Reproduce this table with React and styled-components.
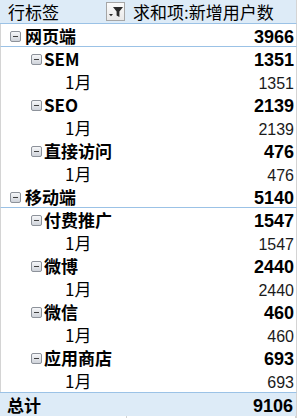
import React from 'react'
import styled, { createGlobalStyle } from 'styled-components'

const GlobalStyle = createGlobalStyle`
  html, body { margin: 0; padding: 0; background: #fff; }
  body { font-family: "Liberation Sans", "Noto Sans CJK SC", sans-serif; color: #000; }
`

const Sheet = styled.div`
  width: 299px;
  height: 418px;
  overflow: hidden;
  background: #fff;
`

const Row = styled.div`
  display: grid;
  grid-template-columns: 127px 169px;
  align-items: baseline;
  width: 297px;
  height: 23px;
  box-sizing: border-box;
  line-height: 23px;
  border-left: 1px solid #d4d4d4;
  border-right: 1px solid #d4d4d4;
  border-bottom: ${({ divider }) => (divider ? '1px solid #9bc2e6' : 'none')};
  white-space: nowrap;
`

const HeaderRow = styled(Row)`
  height: 24px;
  align-items: center;
  background: #ddebf7;
  border-left: none;
  border-bottom: 1px solid #9bc2e6;
`

const TotalRow = styled(Row)`
  height: 24px;
  background: #ddebf7;
  border-left: none;
  border-top: 1px solid #9bc2e6;
`

const Filler = styled.div`
  display: grid;
  grid-template-columns: 127px 169px;
  width: 297px;
  height: 10px;
  box-sizing: border-box;
  border-right: 1px solid #d4d4d4;
  & > div { border-right: 1px solid #d4d4d4; }
`

const HeadLabel = styled.div`
  display: flex;
  align-items: center;
  justify-content: space-between;
  padding: 0 2px 0 8px;
  font-family: "Noto Sans CJK SC", sans-serif;
  font-size: 17px;
`

const HeadValue = styled.div`
  padding-left: 6px;
  font-family: "Noto Sans CJK SC", sans-serif;
  font-size: 17px;
`

const FilterButton = styled.span`
  display: inline-flex;
  width: 19px;
  height: 19px;
  box-sizing: border-box;
  border: 1px solid #a6a6a6;
  background: linear-gradient(#fbfbfb, #e9e9e9);
`

const Label = styled.div`
  padding-left: ${({ indent }) => indent}px;
  font-family: "Noto Sans CJK SC", sans-serif;
  font-size: 17px;
  font-weight: ${({ bold }) => (bold ? 700 : 400)};
`

const Toggle = styled.span`
  display: inline-block;
  position: relative;
  width: 11px;
  height: 11px;
  margin-right: ${({ gap }) => gap}px;
  box-sizing: border-box;
  border: 1px solid #8d929a;
  border-radius: 2px;
  background: linear-gradient(#f6f7f9, #cfd3da);
  vertical-align: 1px;

  &::after {
    content: '';
    position: absolute;
    left: 2px;
    right: 2px;
    top: 4px;
    height: 1px;
    background: #404040;
  }
`

const Value = styled.div`
  padding-right: 3px;
  text-align: right;
  font-family: "Liberation Sans", sans-serif;
  font-size: ${({ bold }) => (bold ? 18 : 16)}px;
  font-weight: ${({ bold }) => (bold ? 700 : 400)};
  color: ${({ bold }) => (bold ? '#000' : '#1a1a1a')};
`

const FunnelIcon = () => (
  <svg width="17" height="17" viewBox="0 0 17 17">
    <path d="M6 4h10l-3.6 4.4V14l-2.8-1.4V8.4z" fill="#2b2b2b" />
    <path d="M2 11h4l-2 2.2z" fill="#2b2b2b" />
  </svg>
)

const data = [
  {
    name: '网页端',
    total: 3966,
    children: [
      { name: 'SEM', value: 1351 },
      { name: 'SEO', value: 2139 },
      { name: '直接访问', value: 476 },
    ],
  },
  {
    name: '移动端',
    total: 5140,
    children: [
      { name: '付费推广', value: 1547 },
      { name: '微博', value: 2440 },
      { name: '微信', value: 460 },
      { name: '应用商店', value: 693 },
    ],
  },
]

export default function App() {
  const grand = data.reduce((s, g) => s + g.total, 0)

  return (
    <Sheet>
      <GlobalStyle />
      <HeaderRow>
        <HeadLabel>
          行标签
          <FilterButton>
            <FunnelIcon />
          </FilterButton>
        </HeadLabel>
        <HeadValue>求和项:新增用户数</HeadValue>
      </HeaderRow>

      {data.map(group => (
        <React.Fragment key={group.name}>
          <Row divider>
            <Label indent={9} bold>
              <Toggle gap={4} />
              {group.name}
            </Label>
            <Value bold>{group.total}</Value>
          </Row>
          {group.children.map(item => (
            <React.Fragment key={item.name}>
              <Row>
                <Label indent={30} bold>
                  <Toggle gap={2} />
                  {item.name}
                </Label>
                <Value bold>{item.value}</Value>
              </Row>
              <Row>
                <Label indent={64}>1月</Label>
                <Value>{item.value}</Value>
              </Row>
            </React.Fragment>
          ))}
        </React.Fragment>
      ))}

      <TotalRow>
        <Label indent={7} bold>总计</Label>
        <Value bold>{grand}</Value>
      </TotalRow>
      <Filler>
        <div />
        <div />
      </Filler>
    </Sheet>
  )
}
